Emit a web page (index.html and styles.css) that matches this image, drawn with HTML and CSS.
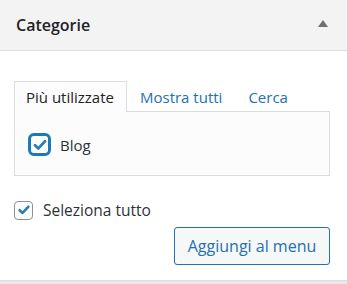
FILE: index.html
```html
<!DOCTYPE html>
<html lang="it">
<head>
  <meta charset="UTF-8">
  <meta name="viewport" content="width=device-width, initial-scale=1.0">
  <title>Categorie</title>
  <link rel="stylesheet" href="styles.css">
</head>
<body>
  <div class="postbox">
    <div class="postbox-header">
      <h3 class="hndle">Categorie</h3>
      <span class="toggle-arrow"></span>
    </div>
    <div class="inside">
      <ul class="tabs">
        <li class="tab active">Più utilizzate</li>
        <li class="tab">Mostra tutti</li>
        <li class="tab">Cerca</li>
      </ul>
      <div class="tabs-panel">
        <label class="item">
          <span class="check focused">
            <svg width="16" height="16" viewBox="0 0 16 16"><path d="M3 8.2 L6.4 11.4 L13 4.2" fill="none" stroke="#2a7dbb" stroke-width="2.8" stroke-linecap="round" stroke-linejoin="round"/></svg>
          </span>
          Blog
        </label>
      </div>
      <label class="item select-all">
        <span class="check">
          <svg width="14" height="14" viewBox="0 0 16 16"><path d="M3 8.2 L6.4 11.4 L13 4.2" fill="none" stroke="#2a7dbb" stroke-width="3" stroke-linecap="round" stroke-linejoin="round"/></svg>
        </span>
        Seleziona tutto
      </label>
      <div class="actions">
        <button class="button">Aggiungi al menu</button>
      </div>
    </div>
  </div>
  <div class="bottom"></div>
</body>
</html>
```

FILE: styles.css
```css
body {
  margin: 0;
  padding: 0;
  background: #fff;
  font-family: "Open Sans", "Noto Sans", Arial, sans-serif;
  color: #2c3338;
  overflow: hidden;
}

.postbox-header {
  height: 50px;
  background-color: #f3f3f3;
  border-bottom: 1px solid #dcdcde;
  display: flex;
  align-items: center;
  justify-content: space-between;
  padding: 0 19px 0 16px;
}

.hndle {
  margin: 0;
  font-size: 16px;
  font-weight: 600;
  color: #1d2327;
}

.toggle-arrow {
  width: 0;
  height: 0;
  border-left: 5px solid transparent;
  border-right: 5px solid transparent;
  border-bottom: 7px solid #6b7075;
  margin-top: -3px;
}

.inside {
  padding: 30px 17px 0 14px;
  height: 229px;
  box-sizing: border-box;
}

.tabs {
  list-style: none;
  margin: 0;
  padding: 0;
  display: flex;
  font-size: 15px;
}

.tab {
  height: 30px;
  line-height: 30px;
  padding: 0 12px 0 11px;
  color: #2271b1;
  border: 1px solid transparent;
  border-bottom: none;
  box-sizing: border-box;
}

.tab.active {
  color: #1d2327;
  background: #fcfcfc;
  border-color: #dcdcde;
  margin-bottom: -1px;
  height: 31px;
  position: relative;
}

.tab + .tab {
  padding-left: 12px;
}

.tabs-panel {
  height: 65px;
  box-sizing: border-box;
  background: #fcfcfc;
  border: 1px solid #dcdcde;
  padding: 21px 0 0 13px;
}

.item {
  display: flex;
  align-items: center;
  font-size: 15px;
  color: #2c3338;
}

.check {
  display: flex;
  align-items: center;
  justify-content: center;
  box-sizing: border-box;
  width: 19px;
  height: 19px;
  border: 1px solid #8c8f94;
  border-radius: 4px;
  background: #fff;
  margin-right: 10px;
}

.check.focused {
  width: 23px;
  height: 23px;
  border: 3px solid #1a7ab8;
  border-radius: 6px;
  margin-right: 9px;
}

.select-all {
  margin-top: 23px;
  font-size: 15.5px;
}

.actions {
  display: flex;
  justify-content: flex-end;
  margin-top: 6px;
}

.button {
  width: 156px;
  height: 38px;
  font-family: inherit;
  font-size: 16px;
  color: #2271b1;
  background: #f6f7f7;
  border: 1px solid #2271b1;
  border-radius: 3px;
  cursor: pointer;
}

.bottom {
  height: 4px;
  border-top: 1px solid #dcdcde;
  background: #e8e8e8;
}
```
